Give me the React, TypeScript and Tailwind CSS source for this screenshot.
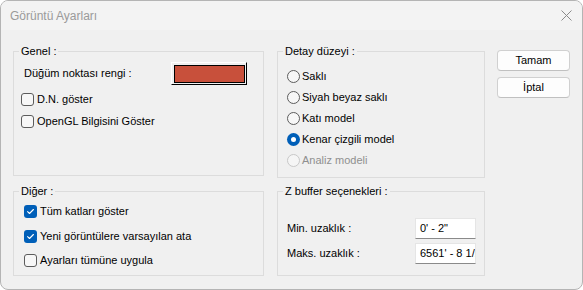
import type { ReactNode } from "react";

const font = { fontFamily: '"Liberation Sans", Arial, sans-serif' };

function Group({ label, className, children }: { label: string; className: string; children?: ReactNode }) {
  return (
    <div className={`relative border border-[#dcdcdc] ${className}`}>
      <span className="absolute left-[5px] top-[-7px] bg-[#f0f0f0] px-[2px] text-[11px] leading-[13px] text-black">
        {label}
      </span>
      {children}
    </div>
  );
}

function Check({ label, checked, className = "" }: { label: string; checked?: boolean; className?: string }) {
  return (
    <div className={`flex items-center gap-[3px] ${className}`}>
      {checked ? (
        <span className="flex h-[13px] w-[13px] items-center justify-center rounded-[3px] bg-[#005fb8]">
          <svg width="9" height="9" viewBox="0 0 9 9">
            <path d="M1.6 4.7 L3.5 6.5 L7.4 2.5" fill="none" stroke="white" strokeWidth="1.1" strokeLinecap="round" strokeLinejoin="round" />
          </svg>
        </span>
      ) : (
        <span className="h-[13px] w-[13px] rounded-[3px] border border-[#5c5c5c] bg-[#f7f7f7]" />
      )}
      <span className="text-[11px] leading-none text-black">{label}</span>
    </div>
  );
}

function Radio({ label, checked, disabled }: { label: string; checked?: boolean; disabled?: boolean }) {
  return (
    <div className="flex h-[21px] items-center gap-[2px]">
      {checked ? (
        <span className="flex h-[13px] w-[13px] items-center justify-center rounded-full bg-[#005fb8]">
          <span className="h-[5px] w-[5px] rounded-full bg-white" />
        </span>
      ) : (
        <span
          className={`h-[13px] w-[13px] rounded-full border ${
            disabled ? "border-[#c8c8c8] bg-[#f5f5f5]" : "border-[#5c5c5c] bg-[#f7f7f7]"
          }`}
        />
      )}
      <span className={`text-[11px] leading-none ${disabled ? "text-[#8f8f8f]" : "text-black"}`}>{label}</span>
    </div>
  );
}

function Field({ label, value }: { label: string; value: string }) {
  return (
    <div className="flex h-[21px] items-center">
      <span className="w-[128px] text-[11px] leading-none text-black">{label}</span>
      <div className="flex h-[21px] w-[61px] items-center overflow-hidden whitespace-nowrap border border-[#e5e5e5] border-b-[#8a8a8a] bg-white pl-[4px] text-[11px] leading-none text-black">
        {value}
      </div>
    </div>
  );
}

function Button({ label }: { label: string }) {
  return (
    <div className="flex h-[21px] items-center justify-center rounded-[4px] border border-[#d0d0d0] border-b-[#c0c0c0] bg-[#fdfdfd] text-[11px] leading-none text-black">
      {label}
    </div>
  );
}

export default function App() {
  return (
    <div style={font} className="flex h-[290px] w-[583px] flex-col overflow-hidden rounded-[8px] border border-[#b4b4b4] bg-[#f0f0f0]">
      <div className="flex h-[29px] shrink-0 items-center justify-between bg-[#f3f3f3] pl-[9px] pr-[10px]">
        <span className="text-[12px] leading-none text-[#9a9a9a]">Görüntü Ayarları</span>
        <svg width="11" height="11" viewBox="0 0 11 11">
          <path d="M0.5 0.5 L10.5 10.5 M10.5 0.5 L0.5 10.5" stroke="#8a8a8a" strokeWidth="1" />
        </svg>
      </div>

      <div className="flex pl-[12px] pt-[21px]">
        <div className="flex w-[251px] flex-col gap-[15px]">
          <Group label="Genel :" className="h-[125px]">
            <div className="flex h-[23px] items-center pl-[10px] pr-[16px] mt-[10px]">
              <span className="text-[11px] leading-none text-black">Düğüm noktası rengi :</span>
              <div className="ml-auto h-[23px] w-[76px] border border-white border-b-black border-r-black p-[2px] pr-[1px] pb-[1px]">
                <div className="h-full w-full border border-black bg-[#c8503b]" />
              </div>
            </div>
            <Check label="D.N. göster" className="mt-[3px] h-[22px] pl-[7px]" />
            <Check label="OpenGL Bilgisini Göster" className="h-[22px] pl-[7px]" />
          </Group>
          <Group label="Diğer :" className="h-[85px]">
            <Check label="Tüm katları göster" checked className="mt-[7px] h-[25px] pl-[10px]" />
            <Check label="Yeni görüntülere varsayılan ata" checked className="h-[24px] pl-[10px]" />
            <Check label="Ayarları tümüne uygula" className="h-[24px] pl-[10px]" />
          </Group>
        </div>

        <div className="ml-[13px] flex w-[208px] flex-col gap-[13px]">
          <Group label="Detay düzeyi :" className="h-[127px]">
            <div className="flex flex-col pl-[9px] pt-[14px]">
              <Radio label="Saklı" />
              <Radio label="Siyah beyaz saklı" />
              <Radio label="Katı model" />
              <Radio label="Kenar çizgili model" checked />
              <Radio label="Analiz modeli" disabled />
            </div>
          </Group>
          <Group label="Z buffer seçenekleri :" className="h-[85px]">
            <div className="flex flex-col gap-[4px] pl-[9px] pt-[26px]">
              <Field label="Min. uzaklık :" value={`0' - 2"`} />
              <Field label="Maks. uzaklık :" value={`6561' - 8 1/2"`} />
            </div>
          </Group>
        </div>

        <div className="ml-[12px] mt-[-1px] flex w-[73px] flex-col gap-[6px]">
          <Button label="Tamam" />
          <Button label="İptal" />
        </div>
      </div>
    </div>
  );
}
